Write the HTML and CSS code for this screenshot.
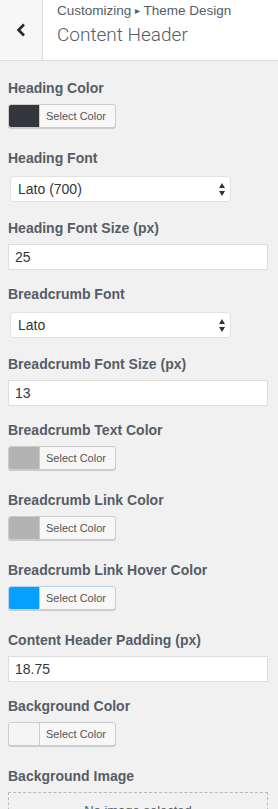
FILE: index.html
```html
<!DOCTYPE html>
<html>
<head>
<meta charset="utf-8">
<link rel="stylesheet" href="styles.css">
</head>
<body>
<div class="header">
  <div class="back">
    <svg width="10" height="14" viewBox="0 0 10 14"><path d="M8 1.5 L2.5 7 L8 12.5" fill="none" stroke="#23282d" stroke-width="2.6"/></svg>
  </div>
  <div class="titles">
    <div class="crumb">Customizing <span class="tri">&#9656;</span> Theme Design</div>
    <div class="title">Content Header</div>
  </div>
</div>
<div class="controls">
  <div class="control color">
    <div class="label">Heading Color</div>
    <div class="cbtn"><span class="swatch sw-dark"></span><span class="ctext">Select Color</span></div>
  </div>
  <div class="control">
    <div class="label">Heading Font</div>
    <div class="select"><span>Lato (700)</span><svg class="arrows" width="6" height="13" viewBox="0 0 6 13"><path d="M3 0 L6 5 L0 5 Z M0 8 L6 8 L3 13 Z" fill="#333"/></svg></div>
  </div>
  <div class="control">
    <div class="label">Heading Font Size (px)</div>
    <div class="input">25</div>
  </div>
  <div class="control">
    <div class="label">Breadcrumb Font</div>
    <div class="select"><span>Lato</span><svg class="arrows" width="6" height="13" viewBox="0 0 6 13"><path d="M3 0 L6 5 L0 5 Z M0 8 L6 8 L3 13 Z" fill="#333"/></svg></div>
  </div>
  <div class="control">
    <div class="label">Breadcrumb Font Size (px)</div>
    <div class="input">13</div>
  </div>
  <div class="control color">
    <div class="label">Breadcrumb Text Color</div>
    <div class="cbtn"><span class="swatch sw-gray"></span><span class="ctext">Select Color</span></div>
  </div>
  <div class="control color">
    <div class="label">Breadcrumb Link Color</div>
    <div class="cbtn"><span class="swatch sw-gray"></span><span class="ctext">Select Color</span></div>
  </div>
  <div class="control color">
    <div class="label">Breadcrumb Link Hover Color</div>
    <div class="cbtn focus"><span class="swatch sw-blue"></span><span class="ctext">Select Color</span></div>
  </div>
  <div class="control">
    <div class="label">Content Header Padding (px)</div>
    <div class="input">18.75</div>
  </div>
  <div class="control color">
    <div class="label">Background Color</div>
    <div class="cbtn"><span class="swatch sw-light"></span><span class="ctext">Select Color</span></div>
  </div>
  <div class="control">
    <div class="label">Background Image</div>
    <div class="placeholder">No image selected</div>
  </div>
</div>
</body>
</html>
```
FILE: styles.css
```css
html, body {
  margin: 0;
  padding: 0;
  background: #f1f1f1;
  font-family: "Liberation Sans", Arial, sans-serif;
  color: #555d66;
  overflow: hidden;
}
.header {
  display: flex;
  height: 60px;
  background: #fff;
  border-bottom: 1px solid #ddd;
}
.back {
  width: 43px;
  background: #f7f7f7;
  border-right: 1px solid #ddd;
  display: flex;
  align-items: center;
  justify-content: center;
  box-sizing: border-box;
  padding-bottom: 1px;
}
.titles {
  padding-left: 14px;
  padding-top: 3px;
}
.crumb {
  font-size: 13.5px;
  line-height: 16px;
  color: #555d66;
}
.tri {
  font-size: 10px;
  position: relative;
  top: -1px;
}
.title {
  font-family: Roboto, "Liberation Sans", sans-serif;
  font-weight: 300;
  font-size: 19px;
  line-height: 28px;
  margin-top: 1px;
  color: #555d66;
}
.controls {
  padding: 17px 10px 0 8px;
}
.control {
  display: flex;
  flex-direction: column;
  align-items: flex-start;
  margin-bottom: 14px;
}
.control.color {
  margin-bottom: 20px;
}
.label {
  font-size: 14px;
  font-weight: 700;
  line-height: 20px;
  margin-bottom: 6px;
}
.cbtn {
  display: flex;
  width: 108px;
  height: 24px;
  box-sizing: border-box;
  border: 1px solid #ccc;
  border-radius: 3px;
  overflow: hidden;
  background: #f7f7f7;
  box-shadow: 0 1px 0 #ccc;
}
.cbtn.focus {
  border-color: #b9d3ea;
}
.swatch {
  width: 30px;
  height: 100%;
  border-right: 1px solid #ccc;
}
.sw-dark { background: #33373b; }
.sw-gray { background: #b3b3b3; }
.sw-blue { background: #05a0ff; }
.sw-light { background: #f5f5f5; }
.ctext {
  flex: 1;
  font-size: 11px;
  line-height: 22px;
  color: #555;
  padding-left: 6px;
}
.select {
  margin: 2px 0 2px 2px;
  width: 221px;
  height: 26px;
  box-sizing: border-box;
  background: #fff;
  border: 1px solid #e2e2e2;
  border-radius: 4px;
  display: flex;
  justify-content: space-between;
  align-items: center;
  padding: 0 5px 0 7px;
  font-size: 14px;
  color: #32373c;
}
.input {
  align-self: stretch;
  height: 26px;
  box-sizing: border-box;
  background: #fff;
  border: 1px solid #ddd;
  padding: 0 6px;
  font-size: 14px;
  line-height: 24px;
  color: #32373c;
}
.placeholder {
  align-self: stretch;
  height: 60px;
  box-sizing: border-box;
  border: 1px dashed #b4b9be;
  text-align: center;
  font-size: 13px;
  padding-top: 10px;
  color: #555d66;
}
```
